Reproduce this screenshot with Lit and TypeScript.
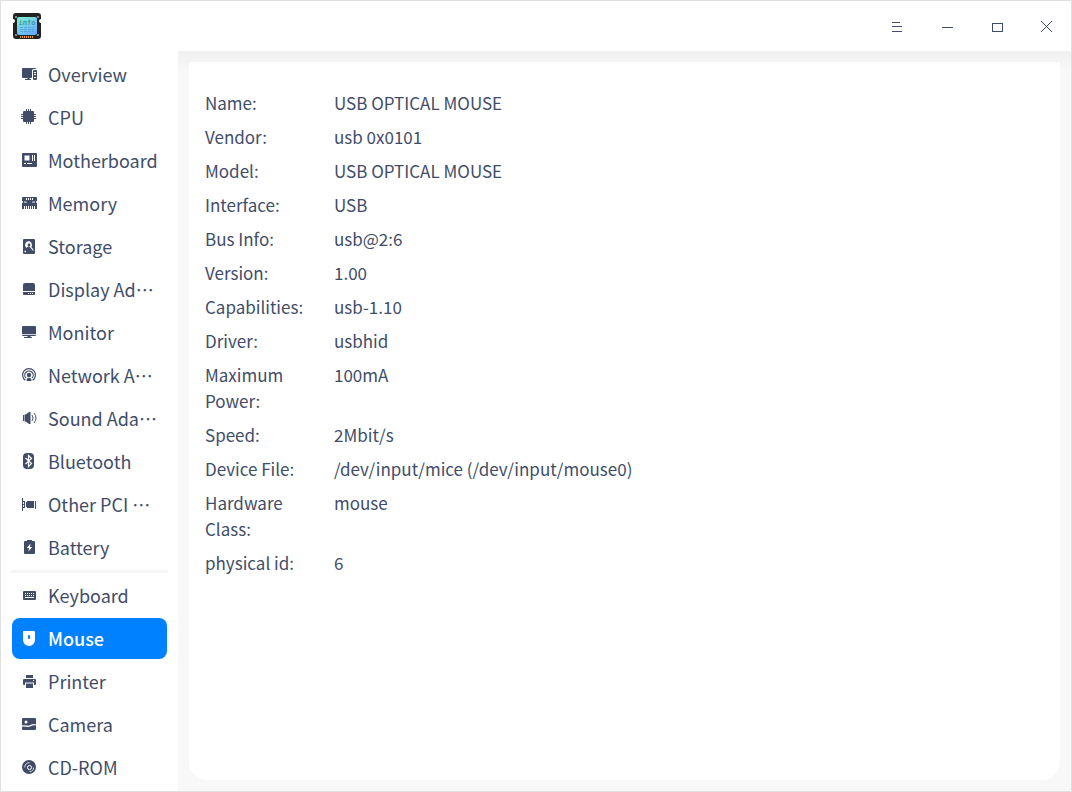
import { LitElement, html, css, svg, nothing } from "lit";
import { customElement, property, state } from "lit/decorators.js";

const icons: Record<string, unknown> = {
  overview: svg`<path d="M2 2h12a1 1 0 0 1 1 1h-2.500a1.500 1.500 0 0 0-1.500 1.500V10H1V3a1 1 0 0 1 1-1z"/><path d="M1 10h10v1a1 1 0 0 1-.5 1H8.500v1H10v1H4v-1h2.500v-1H2a1 1 0 0 1-1-1z"/><path fill-rule="evenodd" d="M13 4h2a1 1 0 0 1 1 1v8a1 1 0 0 1-1 1h-2a1 1 0 0 1-1-1V5a1 1 0 0 1 1-1zM13 6v1h2V6zM13 8v1h2V8zM13 11v1h2v-1z"/>`,
  cpu: svg`<rect x="2" y="2" width="11" height="11" rx="1"/><path d="M5 0h1v15H5zM7 0h1v15H7zM9 0h1v15H9zM0 5h15v1H0zM0 7h15v1H0zM0 9h15v1H0z"/>`,
  board: svg`<path fill-rule="evenodd" d="M2 1h13a1 1 0 0 1 1 1v12a1 1 0 0 1-1 1H2a1 1 0 0 1-1-1V2a1 1 0 0 1 1-1zM3.500 3.500v5h5v-5zM11 3v6h1V3zM13 3v6h1V3zM3 11v1h2v-1zM6 11v1h5v-1z"/>`,
  memory: svg`<path fill-rule="evenodd" d="M2 2h13a1 1 0 0 1 1 1v3q-1 .2-1 1t1 1v6h-2v-3h-1v3h-1v-3h-1v3h-1v-3H9v3H8v-3H7v3H6v-3H5v3H4v-3H3v3H1V8q1-.2 1-1T1 6V3a1 1 0 0 1 1-1zM5 3v2h1V3zM7 3v2h1V3zM9 3v2h1V3zM11 3v2h1V3zM3 6.500v1h3v-.7zM14 6.500l-3 .3v.7h3z"/>`,
  storage: svg`<path fill-rule="evenodd" d="M3 1h10a1 1 0 0 1 1 1v13a1 1 0 0 1-1 1H3a1 1 0 0 1-1-1V2a1 1 0 0 1 1-1zM8 3a4 4 0 0 0-2.500 7.100L7 8.500l1-.6 4 4.900.8-.7-2.500-3A4 4 0 0 0 8 3zM8 5.600a1.400 1.400 0 1 1 0 2.800 1.400 1.400 0 0 1 0-2.800zM3.500 12.800v1.400h1.500v-1.400z"/>`,
  display: svg`<path d="M4 2h8a2 2 0 0 1 2 2v6H2V4a2 2 0 0 1 2-2z"/><path fill-rule="evenodd" d="M2 11h12v2a1 1 0 0 1-1 1H3a1 1 0 0 1-1-1zM7 12v1h1v-1zM9 12v1h1v-1zM11 12v1h1v-1z"/>`,
  monitor: svg`<path d="M2 2h12a1 1 0 0 1 1 1v7H1V3a1 1 0 0 1 1-1zM1 10.800h14V11a1 1 0 0 1-1 1H2a1 1 0 0 1-1-1zM6.500 12h3v1H11v1H3v-1h3.500z"/>`,
  network: svg`<circle cx="8" cy="8" r="2.200"/><path fill="none" stroke="currentColor" stroke-width="1.200" d="M4.300 13.200A6.400 6.400 0 1 1 11.700 13.200M5 11.200a4.200 4.200 0 1 1 6 0"/><path d="M6 11.500q2-1.500 4 0L10.500 14h-5z"/>`,
  sound: svg`<path d="M2 5h1v6H2zM3.500 4.500h1.200L8 2h1.500v12H8l-3.300-2.500H3.500z"/><path fill="none" stroke="currentColor" d="M11 5q2.300 3 0 6M13 3q4 5 0 10"/>`,
  bluetooth: svg`<rect x="2" width="11" height="16" rx="4"/><path fill="none" stroke="#fff" stroke-width="1.200" d="M4.500 5l6 5.500-3 3v-11l3 3-6 5.500"/>`,
  pci: svg`<path d="M1 2h1v13H1zM2 5h2v1H2zM2 8h2v1H2zM2 11h2v1H2zM3 6h1v5H3zM6 5h7v7H6zM5 6h1v5H5zM14 5h1v8h-1z"/>`,
  battery: svg`<path fill-rule="evenodd" d="M6 1h5v1h2a1 1 0 0 1 1 1v11a1 1 0 0 1-1 1H4a1 1 0 0 1-1-1V3a1 1 0 0 1 1-1h2zM9.500 4.500L5.800 9H8l-.6 3.500L11.200 8H9z"/>`,
  keyboard: svg`<path fill-rule="evenodd" d="M3 4h11a1 1 0 0 1 1 1v7a1 1 0 0 1-1 1H3a1 1 0 0 1-1-1V5a1 1 0 0 1 1-1zM4 6v1h1V6zM6 6v1h1V6zM8 6v1h1V6zM10 6v1h1V6zM12 6v1h1V6zM4 8v1h1V8zM6 8v1h1V8zM8 8v1h1V8zM10 8v1h1V8zM12 8v1h1V8zM4 10v1h9v-1z"/>`,
  mouse: svg`<path fill-rule="evenodd" d="M3 1h10a1 1 0 0 1 1 1v8a6 6 0 0 1-12 0V2a1 1 0 0 1 1-1zM8 5a1 1 0 0 0-1 1v2a1 1 0 0 0 2 0V6a1 1 0 0 0-1-1z"/>`,
  printer: svg`<path d="M5 2h7v3H5zM3 6h11a1 1 0 0 1 1 1v4a1 1 0 0 1-1 1h-1V9.500H4V12H3a1 1 0 0 1-1-1V7a1 1 0 0 1 1-1zM5 10.500h7V15H5z"/><path fill="#fff" d="M12 7h1v1h-1z"/>`,
  camera: svg`<path d="M2 2h12a1 1 0 0 1 1 1v5.500C11 6.500 9.500 10.500 5 9.500 3.500 9.100 2.500 9 1 9.500V3a1 1 0 0 1 1-1z"/><path d="M1 10.800c3-.9 4 .5 6.500.1C10.500 10.500 11.500 8.500 15 9.600V13a1 1 0 0 1-1 1H2a1 1 0 0 1-1-1z"/><circle cx="5" cy="6" r="1.500" fill="#fff"/>`,
  disc: svg`<circle cx="8" cy="8" r="7"/><circle cx="8.500" cy="8.500" r="2" fill="none" stroke="#fff"/><path fill="none" stroke="#fff" d="M3.800 8.500A4.400 4.400 0 0 1 8.500 3.700M12.700 8.500A4.200 4.200 0 0 1 8.500 12.500" stroke-opacity=".75"/>`,
};

interface Device { icon: string; label: string }

const hardware: Device[] = [
  { icon: "overview", label: "Overview" },
  { icon: "cpu", label: "CPU" },
  { icon: "board", label: "Motherboard" },
  { icon: "memory", label: "Memory" },
  { icon: "storage", label: "Storage" },
  { icon: "display", label: "Display Adapter" },
  { icon: "monitor", label: "Monitor" },
  { icon: "network", label: "Network Adapter" },
  { icon: "sound", label: "Sound Adapter" },
  { icon: "bluetooth", label: "Bluetooth" },
  { icon: "pci", label: "Other PCI Devices" },
  { icon: "battery", label: "Battery" },
];

const peripherals: Device[] = [
  { icon: "keyboard", label: "Keyboard" },
  { icon: "mouse", label: "Mouse" },
  { icon: "printer", label: "Printer" },
  { icon: "camera", label: "Camera" },
  { icon: "disc", label: "CD-ROM" },
];

const mouseDetails: [string, string][] = [
  ["Name:", "USB OPTICAL MOUSE"],
  ["Vendor:", "usb 0x0101"],
  ["Model:", "USB OPTICAL MOUSE"],
  ["Interface:", "USB"],
  ["Bus Info:", "usb@2:6"],
  ["Version:", "1.00"],
  ["Capabilities:", "usb-1.10"],
  ["Driver:", "usbhid"],
  ["Maximum Power:", "100mA"],
  ["Speed:", "2Mbit/s"],
  ["Device File:", "/dev/input/mice (/dev/input/mouse0)"],
  ["Hardware Class:", "mouse"],
  ["physical id:", "6"],
];

@customElement("title-bar")
export class TitleBar extends LitElement {
  static styles = css`
    :host { display: block; background: #fff; }
    .bar { display: flex; align-items: center; height: 50px; padding-left: 12px; }
    .logo { display: block; width: 28px; height: 28px; }
    .controls { display: flex; margin-left: auto; }
    .control {
      display: grid; place-items: center; width: 50px; height: 50px;
      padding: 0; border: 0; background: none; color: #414d68;
    }
    .control:hover { background: #f2f2f2; }
    .glyph { display: block; width: 20px; height: 20px; fill: currentColor; }
    .word { font: 7px "DejaVu Sans Mono", monospace; }
  `;

  private control(label: string, glyph: unknown) {
    return html`<button class="control" type="button" aria-label=${label}>
      <svg class="glyph" viewBox="0 0 20 20" shape-rendering="crispEdges" aria-hidden="true">${glyph}</svg>
    </button>`;
  }

  render() {
    return html`<header class="bar">
      <svg class="logo" viewBox="0 0 28 28" aria-hidden="true">
        <defs>
          <linearGradient id="screen" x1="0" y1="0" x2=".6" y2="1">
            <stop offset="0" stop-color="#7df3cf" />
            <stop offset="1" stop-color="#68b0ff" />
          </linearGradient>
        </defs>
        <path fill="#222" d="M3 1h22a3 3 0 0 1 3 3v3a2 2 0 0 0 0 4v13a3 3 0 0 1-3 3H3a3 3 0 0 1-3-3V11a2 2 0 0 0 0-4V4a3 3 0 0 1 3-3z" />
        <g fill="#aaa">
          <circle cx="3" cy="5" r="1" /><circle cx="25" cy="5" r="1" />
          <circle cx="3" cy="23" r="1" /><circle cx="25" cy="23" r="1" />
        </g>
        <rect x="4" y="5" width="20" height="18" rx="2" fill="url(#screen)" />
        <text class="word" x="14" y="13" text-anchor="middle" fill="#2f7f7f">info</text>
        <path stroke="#4d9cd0" stroke-opacity=".7" stroke-dasharray="3 1" d="M7 15.500h14M7 17.500h14M7 19.500h14" />
        <path stroke="#e9a91c" stroke-width="2" stroke-dasharray="1 1" d="M7 25h14" />
      </svg>
      <div class="controls">
        ${this.control("Menu", svg`<path d="M6 6h8v1H6zM6 10h10v1H6zM6 15h10v1H6z"/>`)}
        ${this.control("Minimize", svg`<path d="M6 11h11v1H6z"/>`)}
        ${this.control("Maximize", svg`<path fill-rule="evenodd" d="M6 7h11v9H6zM7 8v7h9V8z"/>`)}
        ${this.control("Close", svg`<path fill="none" stroke="currentColor" d="M5 5l11 11M16 5L5 16"/>`)}
      </div>
    </header>`;
  }
}

@customElement("device-nav")
export class DeviceNav extends LitElement {
  @property() selected = "";

  static styles = css`
    :host { display: block; background: #fff; }
    .nav { display: flex; flex-direction: column; gap: 2px; padding: 3px 11px; }
    .item {
      display: flex; gap: 11px; height: 41px; padding: 0 9px;
      border-radius: 8px; color: #414d68; text-decoration: none;
      font-size: 18px; line-height: 40px;
    }
    .item:hover { background: #f2f2f2; }
    .item.active { background: #0081ff; color: #fff; font-weight: 500; }
    .icon { flex: none; width: 16px; height: 16px; margin-top: 12px; fill: currentColor; }
    .label { flex: 1; min-width: 0; overflow: hidden; text-overflow: ellipsis; white-space: nowrap; }
    .rule { height: 3px; margin: 0 -1px; border: 0; background: #f5f5f5; }
  `;

  private item(device: Device) {
    const active = device.label === this.selected;
    return html`<a
      class=${active ? "item active" : "item"}
      href="#${device.icon}"
      aria-current=${active ? "page" : nothing}
      @click=${(e: Event) => {
        e.preventDefault();
        this.dispatchEvent(new CustomEvent("pick", { detail: device.label }));
      }}
    ><svg class="icon" viewBox="0 0 16 16" aria-hidden="true">${icons[device.icon]}</svg><span class="label">${device.label}</span></a>`;
  }

  render() {
    return html`<nav class="nav" aria-label="Devices">
      ${hardware.map((d) => this.item(d))}
      <hr class="rule" />
      ${peripherals.map((d) => this.item(d))}
    </nav>`;
  }
}

@customElement("device-details")
export class DeviceDetails extends LitElement {
  @property({ attribute: false }) rows: [string, string][] = [];

  static styles = css`
    :host { display: block; box-sizing: border-box; background: #fff; border-radius: 0 0 18px 18px; padding: 24px 16px; }
    .list { margin: 0; font-size: 17px; line-height: 26px; color: #414d68; }
    .row { display: grid; grid-template-columns: 109px 1fr; column-gap: 20px; padding: 4px 0; }
    .value { margin: 0; }
  `;

  render() {
    return html`<dl class="list">
      ${this.rows.map(([name, value]) => html`<div class="row"><dt>${name}</dt><dd class="value">${value}</dd></div>`)}
    </dl>`;
  }
}

@customElement("app-root")
export class AppRoot extends LitElement {
  @state() private selected = "Mouse";

  static styles = css`
    :host {
      display: flex; flex-direction: column; box-sizing: border-box;
      min-height: 100vh; border: 1px solid #dfdfdf; background: #fff;
      font-family: "Noto Sans CJK SC", "Noto Sans", sans-serif;
    }
    .body { display: flex; flex: 1; }
    .side { flex: none; width: 177px; }
    .main {
      display: flex; flex: 1; min-width: 0; padding: 11px;
      background: linear-gradient(#f0f0f0, #f8f8f8 20px);
    }
    .details { flex: 1; min-width: 0; }
  `;

  render() {
    return html`
      <title-bar></title-bar>
      <div class="body">
        <device-nav class="side" .selected=${this.selected} @pick=${(e: CustomEvent) => (this.selected = e.detail)}></device-nav>
        <main class="main"><device-details class="details" .rows=${mouseDetails}></device-details></main>
      </div>
    `;
  }
}
